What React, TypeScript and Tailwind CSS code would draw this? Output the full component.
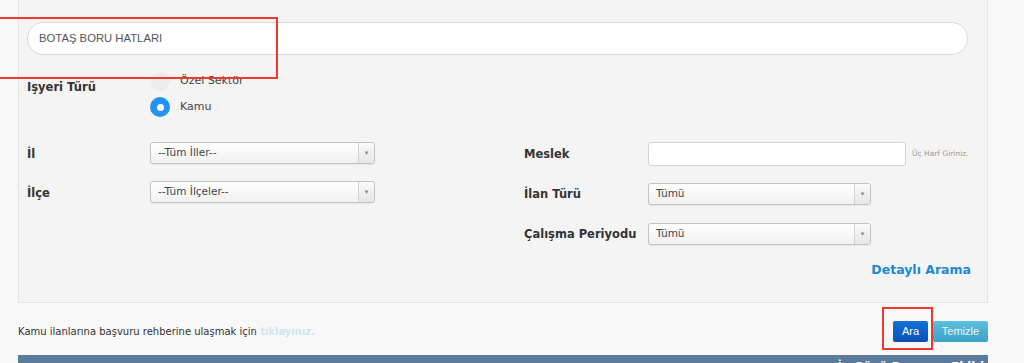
const labelCls = "font-['DejaVu_Sans',sans-serif] text-[11.5px] font-bold text-[#333]";

function Select({ value, width }: { value: string; width: string }) {
  return (
    <div
      className={`${width} h-[22px] flex items-stretch rounded-[3px] border border-[#c4c4c4] bg-gradient-to-b from-white to-[#f1f1f1] shadow-[0_1px_1px_rgba(0,0,0,0.06)]`}
    >
      <div className="flex-1 flex items-center pl-[7px] font-['DejaVu_Sans',sans-serif] text-[10.5px] text-[#444]">
        {value}
      </div>
      <div className="w-[16px] flex items-center justify-center border-l border-[#d2d2d2] bg-gradient-to-b from-[#fafafa] to-[#e6e6e6] rounded-r-[3px]">
        <span className="text-[6px] leading-none text-[#888]">▼</span>
      </div>
    </div>
  );
}

function Radio({ label, checked }: { label: string; checked?: boolean }) {
  return (
    <div className="flex items-center h-[20px]">
      {checked ? (
        <div className="w-[20px] h-[20px] rounded-full bg-[#2293ef] flex items-center justify-center">
          <div className="w-[7px] h-[7px] rounded-full bg-white" />
        </div>
      ) : (
        <div className="w-[19px] h-[19px] ml-[1px] rounded-full bg-[#ececec]" />
      )}
      <span className="ml-[10px] font-['DejaVu_Sans',sans-serif] text-[11px] text-[#444]">{label}</span>
    </div>
  );
}

export default function App() {
  return (
    <div className="relative w-[1024px] h-[363px] overflow-hidden bg-[#f8f8f8]">
      {/* search panel */}
      <div className="ml-[18px] w-[970px] h-[303px] bg-[#f4f4f4] border border-t-0 border-[#e4e4e4] px-[8px] pt-[22px]">
        <div className="w-[941px] h-[33px] rounded-[16px] border border-[#dadada] bg-white flex items-center pl-[11px] font-['Liberation_Sans',sans-serif] text-[11.3px] text-[#555]">
          BOTAŞ BORU HATLARI
        </div>

        {/* işyeri türü */}
        <div className="flex mt-[16px]">
          <div className={`${labelCls} w-[123px] pt-[8px]`}>Işyeri Türü</div>
          <div className="flex flex-col gap-[6px]">
            <Radio label="Özel Sektör" />
            <Radio label="Kamu" checked />
          </div>
        </div>

        {/* form grid */}
        <div className="flex mt-[25px]">
          <div className="w-[497px] flex flex-col">
            <div className="flex items-center h-[22px]">
              <div className={`${labelCls} w-[123px] pt-[3px]`}>İl</div>
              <Select value="--Tüm İller--" width="w-[225px]" />
            </div>
            <div className="flex items-center h-[22px] mt-[17px]">
              <div className={`${labelCls} w-[123px] pt-[3px]`}>İlçe</div>
              <Select value="--Tüm İlçeler--" width="w-[225px]" />
            </div>
          </div>
          <div className="flex-1 flex flex-col">
            <div className="flex items-center h-[24px]">
              <div className={`${labelCls} w-[124px] pt-[2px]`}>Meslek</div>
              <div className="w-[258px] h-[24px] rounded-[3px] border border-[#d4d4d4] bg-white" />
              <span className="ml-[6px] font-['DejaVu_Sans',sans-serif] text-[7.5px] text-[#9a9a9a]">Üç Harf Giriniz.</span>
            </div>
            <div className="flex items-center h-[22px] mt-[17px]">
              <div className={`${labelCls} w-[124px] pt-[2px]`}>İlan Türü</div>
              <Select value="Tümü" width="w-[223px]" />
            </div>
            <div className="flex items-center h-[22px] mt-[18px]">
              <div className={`${labelCls} w-[124px] pt-[2px]`}>Çalışma Periyodu</div>
              <Select value="Tümü" width="w-[223px]" />
            </div>
            <div className="flex justify-end pr-[8px] mt-[16px]">
              <a className="font-['DejaVu_Sans',sans-serif] text-[12.5px] font-bold text-[#1b8ad3]">Detaylı Arama</a>
            </div>
          </div>
        </div>
      </div>

      {/* bottom row */}
      <div className="ml-[18px] w-[970px] flex items-center justify-between mt-[17px] h-[22px]">
        <p className="font-['DejaVu_Sans',sans-serif] text-[10px] text-[#333]">
          Kamu ilanlarına başvuru rehberine ulaşmak için{" "}
          <a className="font-bold text-[#cfe5f4]">tıklayınız.</a>
        </p>
        <div className="flex gap-[5px]">
          <button className="w-[35px] h-[21px] rounded-[2px] bg-gradient-to-b from-[#1470d8] to-[#0a52b4] font-['Liberation_Sans',sans-serif] text-[11px] text-white">
            Ara
          </button>
          <button className="w-[55px] h-[21px] rounded-[2px] bg-gradient-to-b from-[#5cc0df] to-[#3aa1c8] font-['Liberation_Sans',sans-serif] text-[11px] text-[#eef8fc]">
            Temizle
          </button>
        </div>
      </div>

      {/* results header bar */}
      <div className="ml-[18px] w-[970px] h-[30px] mt-[13px] bg-[#5b7b9d] flex justify-end pr-[4px] pt-[3px]">
        <span className="font-['DejaVu_Sans',sans-serif] text-[12px] font-bold text-white">İş Gücü Başvuru Ekibi</span>
      </div>

      {/* red annotation boxes */}
      <div className="absolute left-[-10px] top-[17px] w-[288px] h-[62px] border-[2.5px] border-[#ec3a2c]" />
      <div className="absolute left-[882px] top-[307px] w-[51px] h-[43px] border-[2.5px] border-[#ec3a2c]" />
    </div>
  );
}
